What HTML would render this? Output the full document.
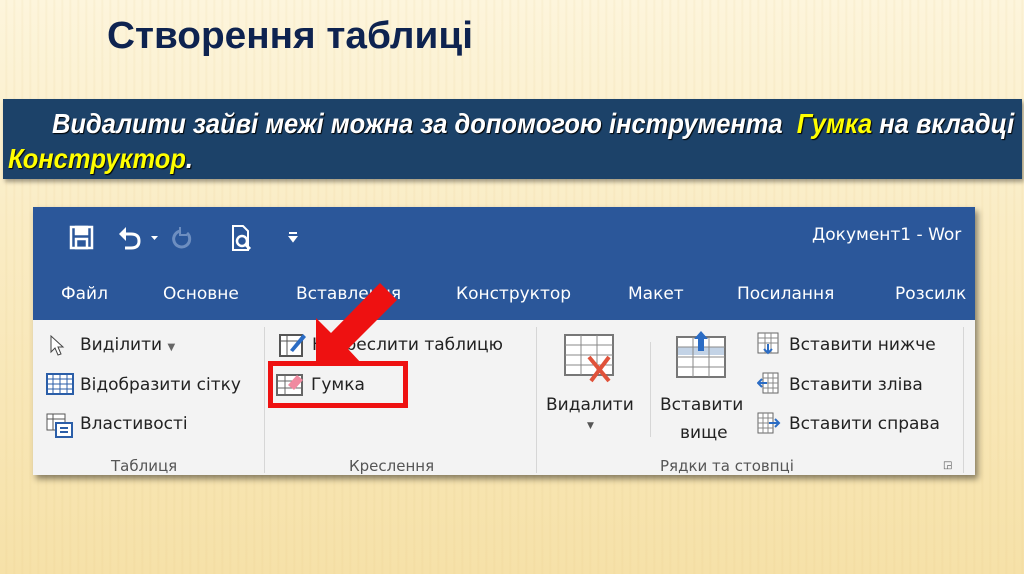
<!DOCTYPE html>
<html><head><meta charset="utf-8"><style>
*{margin:0;padding:0;box-sizing:border-box}
body{width:1024px;height:574px;overflow:hidden;position:relative;font-family:"Liberation Sans",sans-serif;
background:linear-gradient(180deg,#fdf5dc 0%,#faecc4 40%,#f6e1a8 100%);}
.stripes{position:absolute;left:0;top:0;width:1024px;height:574px;
background:repeating-linear-gradient(90deg,rgba(255,255,255,0.0) 0px,rgba(255,255,255,0.0) 5px,rgba(220,190,120,0.12) 6px,rgba(255,255,255,0) 8px);}
.title{position:absolute;left:107px;top:15px;font-size:38px;font-weight:bold;color:#0e2350;white-space:nowrap;transform:scaleX(1.02);transform-origin:left top}
.box{position:absolute;left:3px;top:99px;width:1019px;height:80px;background:#1c4269;box-shadow:2px 3px 4px rgba(0,0,0,.35);}
.l{position:absolute;white-space:nowrap;font-style:italic;font-weight:bold;font-size:28px;color:#fff;transform:scaleX(.91);transform-origin:left top;text-shadow:1px 1px 1px #000}
.y{color:#ffff00}
.win{position:absolute;left:33px;top:207px;width:942px;height:268px;background:#f3f3f3;box-shadow:3px 4px 6px rgba(0,0,0,.45);overflow:hidden;font-family:"DejaVu Sans",sans-serif}
.tb{position:absolute;left:0;top:0;width:942px;height:113px;background:#2b579a}
.w{position:absolute;white-space:nowrap;font-size:17px;color:#222}
.t{position:absolute;white-space:nowrap;font-size:17px;color:#fff}
.g{position:absolute;white-space:nowrap;font-size:15px;color:#555}
.sep{position:absolute;width:1px;background:#d6d6d6}
</style></head><body>
<div class="stripes"></div>
<div class="title">Створення таблиці</div>
<div class="box">
<div class="l" style="left:49px;top:9px">Видалити зайві межі можна за допомогою інструмента&nbsp; <span class="y">Гумка</span> на вкладці</div>
<div class="l" style="left:5px;top:44px"><span class="y">Конструктор</span>.</div>
</div>
<div class="win">
<div class="tb">
<svg style="position:absolute;left:36px;top:16px" width="230" height="30" viewBox="0 0 230 30">
<g fill="none" stroke="#fff" stroke-width="2.5"><rect x="2" y="4" width="21" height="21"/><rect x="7" y="4" width="11" height="7" fill="#fff"/><rect x="7" y="16" width="11" height="9"/></g>
<path d="M56 11 H62 Q70 11 70 18 Q70 25 62 25 H56" fill="none" stroke="#fff" stroke-width="3"/><path d="M50 11 L57 4 V18 Z" fill="#fff"/>
<path d="M82 13 h7 l-3.5 4z" fill="#fff"/>
<path d="M112 8 A8 8 0 1 0 118 10" fill="none" stroke="#6d8ec0" stroke-width="3"/><path d="M111 4 v8 h7" fill="none" stroke="#6d8ec0" stroke-width="2"/>
<path d="M164 3 H174 L179 8 V27 H164 Z" fill="none" stroke="#fff" stroke-width="2"/><circle cx="173" cy="18" r="5" fill="none" stroke="#fff" stroke-width="2.5"/><path d="M176 21 l5 5" stroke="#fff" stroke-width="3"/>
<path d="M220 10 h8 M221 14 h6 l-3 4z" stroke="#fff" stroke-width="2" fill="#fff"/>
</svg>
<div class="t" style="left:779px;top:18px;font-size:17px">Документ1 - Wor</div>
<div class="t" style="left:28px;top:77px">Файл</div>
<div class="t" style="left:130px;top:77px">Основне</div>
<div class="t" style="left:263px;top:77px">Вставлення</div>
<div class="t" style="left:423px;top:77px">Конструктор</div>
<div class="t" style="left:595px;top:77px">Макет</div>
<div class="t" style="left:704px;top:77px">Посилання</div>
<div class="t" style="left:862px;top:77px">Розсилк</div>
</div>
<div class="sep" style="left:231px;top:120px;height:146px"></div>
<div class="sep" style="left:503px;top:120px;height:146px"></div>
<div class="sep" style="left:617px;top:135px;height:95px"></div>
<div class="sep" style="left:930px;top:120px;height:146px"></div>
<svg style="position:absolute;left:15px;top:128px" width="20" height="22"><path d="M3 1 L3 17 L7 13 L10 20 L13 19 L10 12 L15 12 Z" fill="#fff" stroke="#444" stroke-width="1"/></svg>
<div class="w" style="left:47px;top:128px">Виділити <span style="font-size:10px;color:#666">▼</span></div>
<svg style="position:absolute;left:13px;top:166px" width="28" height="22"><rect x="1" y="1" width="26" height="20" fill="#fff" stroke="#2b5ea8" stroke-width="2"/><path d="M1 6h26M1 11h26M1 16h26M7 1v20M14 1v20M21 1v20" stroke="#2b5ea8"/></svg>
<div class="w" style="left:47px;top:168px">Відобразити сітку</div>
<svg style="position:absolute;left:13px;top:206px" width="28" height="26"><rect x="1" y="1" width="18" height="16" fill="#fff" stroke="#555"/><path d="M1 6h18M7 1v16" stroke="#555"/><rect x="10" y="10" width="16" height="14" fill="#fff" stroke="#2b5ea8" stroke-width="2"/><path d="M14 15h8M14 19h8" stroke="#2b5ea8" stroke-width="2"/></svg>
<div class="w" style="left:47px;top:207px">Властивості</div>
<div class="g" style="left:78px;top:250px">Таблиця</div>
<svg style="position:absolute;left:246px;top:123px" width="28" height="28"><rect x="1" y="5" width="22" height="21" fill="#fff" stroke="#555" stroke-width="2"/><path d="M1 11h22M8 5v21" stroke="#555"/><path d="M11 20 L24 4 L27 7 L14 22 Z" fill="#2b6cc4"/></svg>
<div class="w" style="left:279px;top:128px">Накреслити таблицю</div>
<svg style="position:absolute;left:243px;top:165px" width="28" height="24"><rect x="1" y="3" width="25" height="20" fill="#fff" stroke="#666" stroke-width="2"/><path d="M1 9h25M1 16h25M9 3v20" stroke="#666"/><path d="M12 13 L21 3 L27 8 L18 18 Z" fill="#f08aa0"/></svg>
<div class="w" style="left:278px;top:168px">Гумка</div>
<div class="g" style="left:316px;top:250px">Креслення</div>
<svg style="position:absolute;left:530px;top:126px" width="52" height="50"><rect x="2" y="2" width="48" height="40" fill="#fff" stroke="#777" stroke-width="2"/><path d="M2 12h48M2 22h48M2 32h48M18 2v40M34 2v40" stroke="#888"/><path d="M26 24 L46 48 M46 24 L28 48" stroke="#e0523a" stroke-width="4"/></svg>
<div class="w" style="left:513px;top:188px">Видалити</div>
<div class="g" style="left:554px;top:214px;font-size:9px">▼</div>
<svg style="position:absolute;left:642px;top:122px" width="52" height="52"><rect x="2" y="8" width="48" height="40" fill="#fff" stroke="#777" stroke-width="2"/><rect x="3" y="18" width="46" height="8" fill="#c3d3e6"/><path d="M2 18h48M2 28h48M2 38h48M18 8v40M34 8v40" stroke="#888"/><path d="M26 2 L33 10 H29 V22 H23 V10 H19 Z" fill="#2b6cc4"/></svg>
<div class="w" style="left:627px;top:188px">Вставити</div>
<div class="w" style="left:647px;top:216px">вище</div>
<svg style="position:absolute;left:724px;top:125px" width="22" height="24"><rect x="1" y="1" width="20" height="20" fill="#fff" stroke="#666"/><path d="M1 6h20M1 11h20M8 1v20M14 1v20" stroke="#888"/><path d="M11 12v9M7 17l4 4 4-4" stroke="#2b6cc4" stroke-width="2" fill="none"/></svg>
<div class="w" style="left:756px;top:128px">Вставити нижче</div>
<svg style="position:absolute;left:724px;top:165px" width="22" height="24"><rect x="6" y="1" width="15" height="20" fill="#fff" stroke="#666"/><path d="M6 6h15M6 11h15M6 16h15M11 1v20M16 1v20" stroke="#888"/><path d="M1 11h9M5 7l-4 4 4 4" stroke="#2b6cc4" stroke-width="2" fill="none"/></svg>
<div class="w" style="left:756px;top:168px">Вставити зліва</div>
<svg style="position:absolute;left:724px;top:205px" width="24" height="24"><rect x="1" y="1" width="15" height="20" fill="#fff" stroke="#666"/><path d="M1 6h15M1 11h15M1 16h15M6 1v20M11 1v20" stroke="#888"/><path d="M12 11h10M18 7l4 4-4 4" stroke="#2b6cc4" stroke-width="2" fill="none"/></svg>
<div class="w" style="left:756px;top:207px">Вставити справа</div>
<div class="g" style="left:627px;top:250px">Рядки та стовпці</div>
<div class="g" style="left:910px;top:253px;font-size:10px">◲</div>
</div>
<div style="position:absolute;left:268px;top:361px;width:140px;height:47px;border:5px solid #ee1111"></div>
<svg style="position:absolute;left:0;top:0" width="1024" height="574"><polygon points="316,364 316,318 331,333 380,283 397,300 348,349 362,364" fill="#ee1111"/></svg>
</body></html>
